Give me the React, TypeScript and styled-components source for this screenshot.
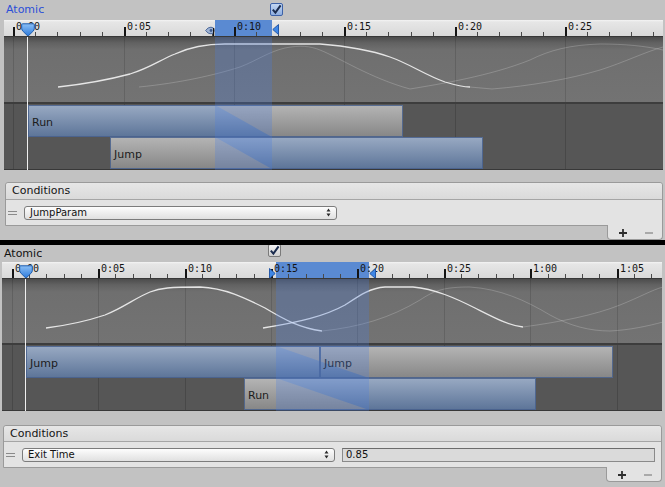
import React from "react";
import styled, { createGlobalStyle } from "styled-components";

type Color = "blue" | "gray";

interface BarSpec {
  row: number;
  from: number;
  to: number;
  label: string;
  before: Color;
  after: Color;
}
interface CurveSpec {
  d: string;
  faint?: boolean;
}
interface HandleSpec {
  kind: "eye" | "left" | "right";
  x: number;
  top: number;
}
interface PanelSpec {
  id: string;
  focused: boolean;
  padL: number;
  padR: number;
  atomicH: number;
  checkTop: number;
  tlLeft: number;
  tlWidth: number;
  origin: number;
  major: number;
  labels: string[];
  zone: [number, number];
  playhead: number;
  curveTop: number;
  curveH: number;
  handles: HandleSpec[];
  bars: BarSpec[];
  curves: CurveSpec[];
  condGap: number;
  headerH: number;
  condition: string;
  value?: string;
}

const panels: PanelSpec[] = [
  {
    id: "top",
    focused: true,
    padL: 4,
    padR: 2,
    atomicH: 20,
    checkTop: 3,
    tlLeft: 4,
    tlWidth: 659,
    origin: 13.3,
    major: 110.35,
    labels: ["0:00", "0:05", "0:10", "0:15", "0:20", "0:25"],
    zone: [215, 272],
    playhead: 27,
    curveTop: 37,
    curveH: 65,
    handles: [
      { kind: "eye", x: 205, top: 6 },
      { kind: "left", x: 272, top: 4 },
    ],
    bars: [
      { row: 0, from: 28, to: 403, label: "Run", before: "blue", after: "gray" },
      { row: 1, from: 110, to: 483, label: "Jump", before: "gray", after: "blue" },
    ],
    curves: [
      {
        d: "M58,87 C95,83 115,78 130,74 C150,68 160,60 175,54 C190,47 205,44 225,44 L320,44 C345,46 370,50 390,57 C410,64 425,75 445,82 C455,85 463,87 470,87",
      },
      {
        d: "M139,87 C180,83 215,75 240,67 C258,60 268,52 285,48 C300,45 310,46 320,50 C340,58 370,78 410,89 C440,84 490,76 530,60 C550,50 570,45 600,44 C625,44 645,46 663,50",
        faint: true,
      },
      {
        d: "M470,87 L492,89 C530,86 570,79 600,70 C625,62 645,52 663,47",
        faint: true,
      },
    ],
    condGap: 12,
    headerH: 16,
    condition: "JumpParam",
  },
  {
    id: "bottom",
    focused: false,
    padL: 2,
    padR: 3,
    atomicH: 17,
    checkTop: -1,
    tlLeft: 2,
    tlWidth: 660,
    origin: 11.7,
    major: 86.43,
    labels: ["0:00", "0:05", "0:10", "0:15", "0:20", "0:25", "1:00", "1:05"],
    zone: [276, 369],
    playhead: 25,
    curveTop: 279,
    curveH: 64,
    handles: [
      { kind: "right", x: 269, top: 6 },
      { kind: "left", x: 369, top: 6 },
    ],
    bars: [
      { row: 0, from: 26, to: 320, label: "Jump", before: "blue", after: "gray" },
      { row: 0, from: 320, to: 613, label: "Jump", before: "blue", after: "gray" },
      { row: 1, from: 244, to: 536, label: "Run", before: "gray", after: "blue" },
    ],
    curves: [
      {
        d: "M46,328 C70,325 90,320 105,315 C125,307 135,298 150,292 C160,288 170,287 200,287 C225,288 245,298 265,308 C285,320 300,328 322,331",
      },
      {
        d: "M263,328 C300,322 325,316 345,305 C360,295 370,288 385,287 L413,287 C435,289 455,298 475,308 C495,318 510,326 523,327",
      },
      {
        d: "M322,331 C360,327 390,318 420,300 C435,290 445,287 470,287 C500,289 525,300 550,315 C570,326 590,331 610,331 C630,330 648,326 663,322",
        faint: true,
      },
      {
        d: "M523,327 C560,322 595,315 620,305 C640,297 652,290 663,287",
        faint: true,
      },
    ],
    condGap: 14,
    headerH: 15,
    condition: "Exit Time",
    value: "0.85",
  },
];

const GlobalStyle = createGlobalStyle`
  html, body {
    margin: 0;
    padding: 0;
    background: #c2c2c2;
  }
  body {
    font-family: "DejaVu Sans", "Liberation Sans", sans-serif;
    overflow: hidden;
  }
`;

const Page = styled.div`
  width: 665px;
  height: 487px;
  display: flex;
  flex-direction: column;
  overflow: hidden;
  background: #c2c2c2;
`;

const Panel = styled.section<{ $padL: number; $padR: number }>`
  display: flex;
  flex-direction: column;
  padding: 0 ${(p) => p.$padR}px 0 ${(p) => p.$padL}px;
`;

const Divider = styled.div`
  height: 5px;
  background: #000;
  flex: none;
`;

const AtomicRow = styled.div<{ $h: number }>`
  height: ${(p) => p.$h}px;
  display: grid;
  grid-template-columns: 264px 13px;
  align-items: start;
  padding-left: 2px;
  overflow: hidden;
`;

const AtomicLabel = styled.span<{ $focused: boolean; $h: number }>`
  font-size: 11px;
  line-height: ${(p) => p.$h}px;
  color: ${(p) => (p.$focused ? "#2b4fd8" : "#121212")};
`;

const CheckBox = styled.span<{ $focused: boolean; $top: number }>`
  margin-top: ${(p) => p.$top}px;
  width: 13px;
  height: 13px;
  box-sizing: border-box;
  border: 1px solid ${(p) => (p.$focused ? "#3d62a8" : "#7a7a7a")};
  border-radius: 2px;
  background: ${(p) =>
    p.$focused
      ? "linear-gradient(#c2d6f2, #8eaee0)"
      : "linear-gradient(#f4f4f4, #d0d0d0)"};
  display: flex;
  align-items: center;
  justify-content: center;
`;

const Timeline = styled.div`
  display: flex;
  flex-direction: column;
`;

const Ruler = styled.div`
  position: relative;
  height: 17px;
  box-sizing: border-box;
  border-bottom: 1px solid #383838;
  background: linear-gradient(#f4f4f4 0, #e6e6e6 2px, #d9d9d9 100%);
  overflow: hidden;
`;

const Selection = styled.div<{ $left: number; $width: number }>`
  position: absolute;
  top: 0;
  bottom: 0;
  left: ${(p) => p.$left}px;
  width: ${(p) => p.$width}px;
  background: #5a8ad2;
`;

const Tick = styled.div<{ $x: number; $major: boolean }>`
  position: absolute;
  bottom: 0;
  left: ${(p) => p.$x}px;
  width: ${(p) => (p.$major ? 2 : 1)}px;
  height: ${(p) => (p.$major ? 9 : 4)}px;
  background: ${(p) => (p.$major ? "#141414" : "#4a4a4a")};
`;

const TickLabel = styled.span<{ $x: number }>`
  position: absolute;
  top: 2px;
  left: ${(p) => p.$x}px;
  font-family: "DejaVu Sans Mono", "Liberation Mono", monospace;
  font-size: 10px;
  line-height: 10px;
  color: #141414;
  white-space: nowrap;
`;

const HandleIcon = styled.svg<{ $x: number; $top: number }>`
  position: absolute;
  left: ${(p) => p.$x}px;
  top: ${(p) => p.$top}px;
  overflow: visible;
`;

const PlayheadMarker = styled.svg<{ $x: number }>`
  position: absolute;
  left: ${(p) => p.$x}px;
  top: 3px;
`;

const TimelineBody = styled.div`
  position: relative;
  display: flex;
  flex-direction: column;
`;

const CurveArea = styled.div<{ $h: number }>`
  position: relative;
  height: ${(p) => p.$h}px;
  border-bottom: 2px solid #3d3d3d;
  background: linear-gradient(#4c4c4c 0px, #626262 6px, #6f6f6f 13px, #737373 100%);
  overflow: hidden;
`;

const CurveSvg = styled.svg`
  position: absolute;
  inset: 0;
  width: 100%;
  height: 100%;
`;

const GridLine = styled.div<{ $x: number; $dark?: boolean }>`
  position: absolute;
  top: 0;
  bottom: 0;
  left: ${(p) => p.$x}px;
  width: 1px;
  background: ${(p) => (p.$dark ? "rgba(0,0,0,0.16)" : "rgba(0,0,0,0.13)")};
`;

const Tracks = styled.div`
  position: relative;
  display: flex;
  flex-direction: column;
  padding-top: 1px;
  border-bottom: 1px solid #383838;
  background: #565656;
`;

const TrackRow = styled.div`
  position: relative;
  height: 32px;
`;

const fills: Record<Color, string> = {
  blue: "linear-gradient(#99aac3, #5c7498)",
  gray: "linear-gradient(#b5b5b5, #868686)",
};

const Bar = styled.div<{ $left: number; $width: number }>`
  position: absolute;
  top: 0;
  height: 32px;
  left: ${(p) => p.$left}px;
  width: ${(p) => p.$width}px;
  display: grid;
  overflow: hidden;
  &::after {
    content: "";
    position: absolute;
    inset: 0;
    border: 1px solid rgba(72, 96, 140, 0.85);
    pointer-events: none;
  }
`;

const BarFill = styled.div`
  grid-area: 1 / 1;
  display: flex;
`;

const SolidSeg = styled.div<{ $w: number; $color: Color }>`
  flex: none;
  width: ${(p) => p.$w}px;
  background: ${(p) => fills[p.$color]};
`;

const DiagSeg = styled.div<{ $w: number; $lower: Color; $upper: Color; $a: number; $b: number }>`
  flex: none;
  position: relative;
  width: ${(p) => p.$w}px;
  background: ${(p) => fills[p.$lower]};
  &::after {
    content: "";
    position: absolute;
    inset: 0;
    background: ${(p) => fills[p.$upper]};
    clip-path: polygon(0 0, 100% 0, 100% ${(p) => p.$b}%, 0 ${(p) => p.$a}%);
  }
`;

const BarLabel = styled.span`
  grid-area: 1 / 1;
  position: relative;
  align-self: center;
  margin-top: 4px;
  padding-left: 4px;
  font-size: 11px;
  line-height: 14px;
  color: #1c1c1c;
  white-space: nowrap;
`;

const ZoneOverlay = styled.div<{ $left: number; $width: number }>`
  position: absolute;
  top: 0;
  bottom: 0;
  left: ${(p) => p.$left}px;
  width: ${(p) => p.$width}px;
  background: rgba(74, 126, 224, 0.27);
  pointer-events: none;
`;

const PlayheadLine = styled.div<{ $x: number }>`
  position: absolute;
  top: 0;
  bottom: 0;
  left: ${(p) => p.$x}px;
  width: 1px;
  background: #f0f0f0;
`;

const Conditions = styled.div<{ $gap: number }>`
  margin: ${(p) => p.$gap}px 0 0 1px;
  border: 1px solid #9a9a9a;
  border-radius: 3px 3px 0 0;
  background: #e3e3e3;
  display: flex;
  flex-direction: column;
`;

const ConditionsHeader = styled.div<{ $h: number }>`
  height: ${(p) => p.$h}px;
  border-bottom: 1px solid #a5a5a5;
  background: linear-gradient(#e6e6e6, #dadada);
  padding-left: 6px;
  font-size: 11px;
  line-height: ${(p) => p.$h}px;
  color: #141414;
  border-radius: 3px 3px 0 0;
`;

const ConditionRow = styled.div`
  height: 25px;
  display: grid;
  grid-template-columns: 16px 313px 1fr;
  align-items: center;
  padding: 0 6px 0 2px;
`;

const DragHandle = styled.span`
  width: 9px;
  height: 2px;
  border-top: 1px solid #8a8a8a;
  border-bottom: 1px solid #8a8a8a;
`;

const Dropdown = styled.div`
  height: 14px;
  box-sizing: border-box;
  border: 1px solid #7c7c7c;
  border-radius: 3px;
  background: linear-gradient(#fdfdfd, #e0e0e0);
  display: flex;
  align-items: center;
  justify-content: space-between;
  padding: 0 5px 0 5px;
  font-size: 10px;
  line-height: 12px;
  color: #111;
`;

const ValueField = styled.div`
  margin-left: 7px;
  height: 14px;
  box-sizing: border-box;
  border: 1px solid #8a8a8a;
  border-top-color: #6c6c6c;
  background: #dadada;
  padding-left: 3px;
  font-size: 10px;
  line-height: 12px;
  color: #111;
`;

const Footer = styled.div`
  align-self: flex-end;
  margin-top: -1px;
  width: 56px;
  height: 15px;
  box-sizing: border-box;
  border: 1px solid #9a9a9a;
  border-top: none;
  border-radius: 0 0 4px 4px;
  background: #e3e3e3;
  display: flex;
  align-items: center;
  gap: 18px;
  padding: 2px 0 0 11px;
`;

function ticksFor(p: PanelSpec) {
  const minor = p.major / 5;
  const out: { x: number; major: boolean; label?: string }[] = [];
  for (let i = 0; ; i++) {
    const x = p.origin + i * minor;
    if (x > p.tlLeft + p.tlWidth - 2) break;
    const major = i % 5 === 0;
    out.push({
      x: Math.round(x) - p.tlLeft,
      major,
      label: major ? p.labels[i / 5] : undefined,
    });
  }
  return out;
}

type Seg =
  | { type: "solid"; w: number; color: Color }
  | { type: "diag"; w: number; a: number; b: number };

function segmentsFor(b: BarSpec, zone: [number, number]): Seg[] {
  const [z0, z1] = zone;
  const out: Seg[] = [];
  if (b.from < z0) out.push({ type: "solid", color: b.before, w: Math.min(b.to, z0) - b.from });
  const s0 = Math.max(b.from, z0);
  const s1 = Math.min(b.to, z1);
  if (s1 > s0)
    out.push({
      type: "diag",
      w: s1 - s0,
      a: ((s0 - z0) / (z1 - z0)) * 100,
      b: ((s1 - z0) / (z1 - z0)) * 100,
    });
  if (b.to > z1) out.push({ type: "solid", color: b.after, w: b.to - Math.max(b.from, z1) });
  return out;
}

const Check = () => (
  <svg width="11" height="11" viewBox="0 0 11 11">
    <path d="M1.8,5.6 L4.4,8.6 L9.6,1.4" fill="none" stroke="#1b2c4e" strokeWidth="2" />
  </svg>
);

const Handle = ({ h, left }: { h: HandleSpec; left: number }) => {
  if (h.kind === "eye") {
    return (
      <HandleIcon $x={h.x - left} $top={h.top} width="10" height="9" viewBox="0 0 10 9">
        <path d="M0.6,4.5 Q3,1 6,1.2 A3.3,3.3 0 0 1 6,7.8 Q3,8 0.6,4.5 Z" fill="#9fb3d3" stroke="#4b689a" strokeWidth="1" />
        <circle cx="6" cy="4.5" r="1.4" fill="#3c5a8e" />
        <rect x="8" y="2" width="1.2" height="9" fill="#141414" />
      </HandleIcon>
    );
  }
  const d = h.kind === "left" ? "M6.5,0.5 L0.8,5.5 L6.5,10.5 Z" : "M0.5,0.5 L6.2,5.5 L0.5,10.5 Z";
  return (
    <HandleIcon $x={h.x - left} $top={h.top} width="7" height="11" viewBox="0 0 7 11">
      <path d={d} fill="#3f87e6" stroke="#2458a8" strokeWidth="1" strokeLinejoin="round" />
    </HandleIcon>
  );
};

const PlusIcon = () => (
  <svg width="8" height="8" viewBox="0 0 8 8">
    <path d="M3.1,0 H4.9 V8 H3.1 Z M0,3.1 H8 V4.9 H0 Z" fill="#2e2e2e" />
  </svg>
);

const MinusIcon = () => (
  <svg width="8" height="8" viewBox="0 0 8 8">
    <path d="M0,3.2 H8 V4.8 H0 Z" fill="#9a9a9a" />
  </svg>
);

const UpDown = () => (
  <svg width="5" height="9" viewBox="0 0 5 9">
    <path d="M0.5,3.6 L2.5,0.6 L4.5,3.6 Z M0.5,5.4 L2.5,8.4 L4.5,5.4 Z" fill="#2a2a2a" />
  </svg>
);

const TransitionPanel = ({ p }: { p: PanelSpec }) => {
  const ticks = ticksFor(p);
  const majors = ticks.filter((t) => t.major);
  const [z0, z1] = p.zone;
  const rows = [0, 1];
  return (
    <Panel $padL={p.padL} $padR={p.padR}>
      <AtomicRow $h={p.atomicH}>
        <AtomicLabel $focused={p.focused} $h={p.atomicH}>
          Atomic
        </AtomicLabel>
        <CheckBox $focused={p.focused} $top={p.checkTop}>
          <Check />
        </CheckBox>
      </AtomicRow>
      <Timeline>
        <Ruler>
          <Selection $left={z0 - p.tlLeft} $width={z1 - z0} />
          {ticks.map((t, i) => (
            <Tick key={i} $x={t.x} $major={t.major} />
          ))}
          {ticks
            .filter((t) => t.label)
            .map((t) => (
              <TickLabel key={t.label} $x={t.x + 3}>
                {t.label}
              </TickLabel>
            ))}
          {p.handles.map((h, i) => (
            <Handle key={i} h={h} left={p.tlLeft} />
          ))}
          <PlayheadMarker $x={p.playhead - p.tlLeft - 6} width="14" height="14" viewBox="0 0 14 14">
            <defs>
              <linearGradient id={`ph-${p.id}`} x1="0" y1="0" x2="0" y2="1">
                <stop offset="0" stopColor="#8cc0f6" />
                <stop offset="1" stopColor="#2a78da" />
              </linearGradient>
            </defs>
            <path
              d="M1.5,0.8 H12.5 Q13.3,0.8 13.3,1.8 V5.6 Q13.3,7 11.8,8.5 L7,13.2 L2.2,8.5 Q0.7,7 0.7,5.6 V1.8 Q0.7,0.8 1.5,0.8 Z"
              fill={`url(#ph-${p.id})`}
              stroke="#1d5cae"
              strokeWidth="1"
            />
          </PlayheadMarker>
        </Ruler>
        <TimelineBody>
          <CurveArea $h={p.curveH}>
            {majors.map((t, i) => (
              <GridLine key={i} $x={t.x} />
            ))}
            <CurveSvg
              viewBox={`${p.tlLeft} ${p.curveTop} ${p.tlWidth} ${p.curveH}`}
              preserveAspectRatio="none"
            >
              {p.curves.map((c, i) => (
                <path
                  key={i}
                  d={c.d}
                  fill="none"
                  stroke="#ffffff"
                  strokeOpacity={c.faint ? 0.2 : 0.82}
                  strokeWidth={c.faint ? 1 : 1.3}
                />
              ))}
            </CurveSvg>
          </CurveArea>
          <Tracks>
            {majors.map((t, i) => (
              <GridLine key={i} $x={t.x} $dark />
            ))}
            {rows.map((r) => (
              <TrackRow key={r}>
                {p.bars
                  .filter((b) => b.row === r)
                  .map((b, i) => (
                    <Bar key={i} $left={b.from - p.tlLeft} $width={b.to - b.from}>
                      <BarFill>
                        {segmentsFor(b, p.zone).map((s, j) =>
                          s.type === "solid" ? (
                            <SolidSeg key={j} $w={s.w} $color={s.color} />
                          ) : (
                            <DiagSeg
                              key={j}
                              $w={s.w}
                              $lower={b.before}
                              $upper={b.after}
                              $a={s.a}
                              $b={s.b}
                            />
                          )
                        )}
                      </BarFill>
                      <BarLabel>{b.label}</BarLabel>
                    </Bar>
                  ))}
              </TrackRow>
            ))}
          </Tracks>
          <ZoneOverlay $left={z0 - p.tlLeft} $width={z1 - z0} />
          <PlayheadLine $x={p.playhead - p.tlLeft} />
        </TimelineBody>
      </Timeline>
      <Conditions $gap={p.condGap}>
        <ConditionsHeader $h={p.headerH}>Conditions</ConditionsHeader>
        <ConditionRow>
          <DragHandle />
          <Dropdown>
            <span>{p.condition}</span>
            <UpDown />
          </Dropdown>
          {p.value !== undefined ? <ValueField>{p.value}</ValueField> : <span />}
        </ConditionRow>
      </Conditions>
      <Footer>
        <PlusIcon />
        <MinusIcon />
      </Footer>
    </Panel>
  );
};

export default function App() {
  return (
    <Page>
      <GlobalStyle />
      <TransitionPanel p={panels[0]} />
      <Divider />
      <TransitionPanel p={panels[1]} />
    </Page>
  );
}
